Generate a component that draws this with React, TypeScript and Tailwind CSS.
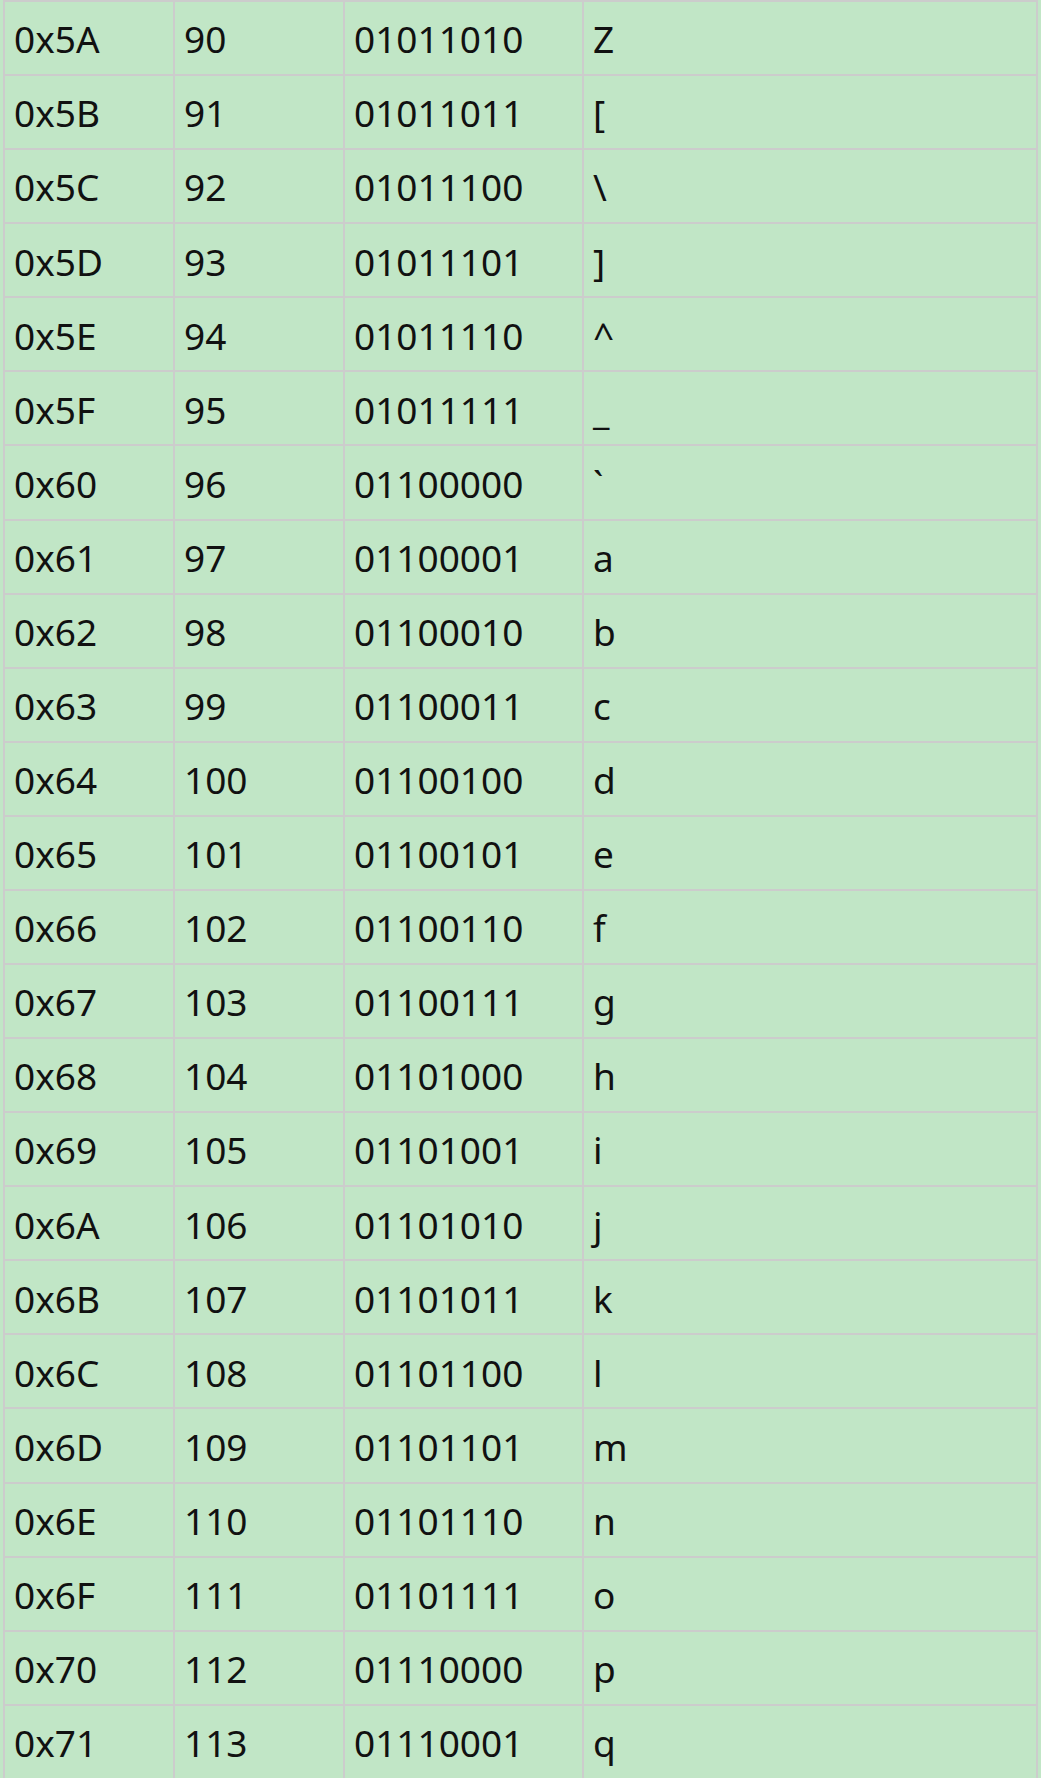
const rows: [string, string, string, string][] = [
  ["0x5A", "90", "01011010", "Z"],
  ["0x5B", "91", "01011011", "["],
  ["0x5C", "92", "01011100", "\\"],
  ["0x5D", "93", "01011101", "]"],
  ["0x5E", "94", "01011110", "^"],
  ["0x5F", "95", "01011111", "_"],
  ["0x60", "96", "01100000", "`"],
  ["0x61", "97", "01100001", "a"],
  ["0x62", "98", "01100010", "b"],
  ["0x63", "99", "01100011", "c"],
  ["0x64", "100", "01100100", "d"],
  ["0x65", "101", "01100101", "e"],
  ["0x66", "102", "01100110", "f"],
  ["0x67", "103", "01100111", "g"],
  ["0x68", "104", "01101000", "h"],
  ["0x69", "105", "01101001", "i"],
  ["0x6A", "106", "01101010", "j"],
  ["0x6B", "107", "01101011", "k"],
  ["0x6C", "108", "01101100", "l"],
  ["0x6D", "109", "01101101", "m"],
  ["0x6E", "110", "01101110", "n"],
  ["0x6F", "111", "01101111", "o"],
  ["0x70", "112", "01110000", "p"],
  ["0x71", "113", "01110001", "q"],
];

function Cell({ text, className }: { text: string; className: string }) {
  return (
    <div className={`flex items-center border-l-2 border-[#cccccc] pl-[9px] pt-[2px] ${className}`}>
      {text}
    </div>
  );
}

export default function App() {
  return (
    <div className="h-[1778px] w-[1041px] overflow-hidden bg-[#c1e6c6] px-[3px] text-[37px] text-[#111111] font-['Noto_Sans','Open_Sans',sans-serif]">
      <div className="flex h-full flex-col border-r-2 border-[#cccccc]">
        {rows.map((r) => (
          <div key={r[0]} className="flex flex-1 border-t-2 border-[#cccccc]">
            <Cell text={r[0]} className="w-[170px]" />
            <Cell text={r[1]} className="w-[170px]" />
            <Cell text={r[2]} className="w-[239px]" />
            <Cell text={r[3]} className="flex-1" />
          </div>
        ))}
      </div>
    </div>
  );
}
